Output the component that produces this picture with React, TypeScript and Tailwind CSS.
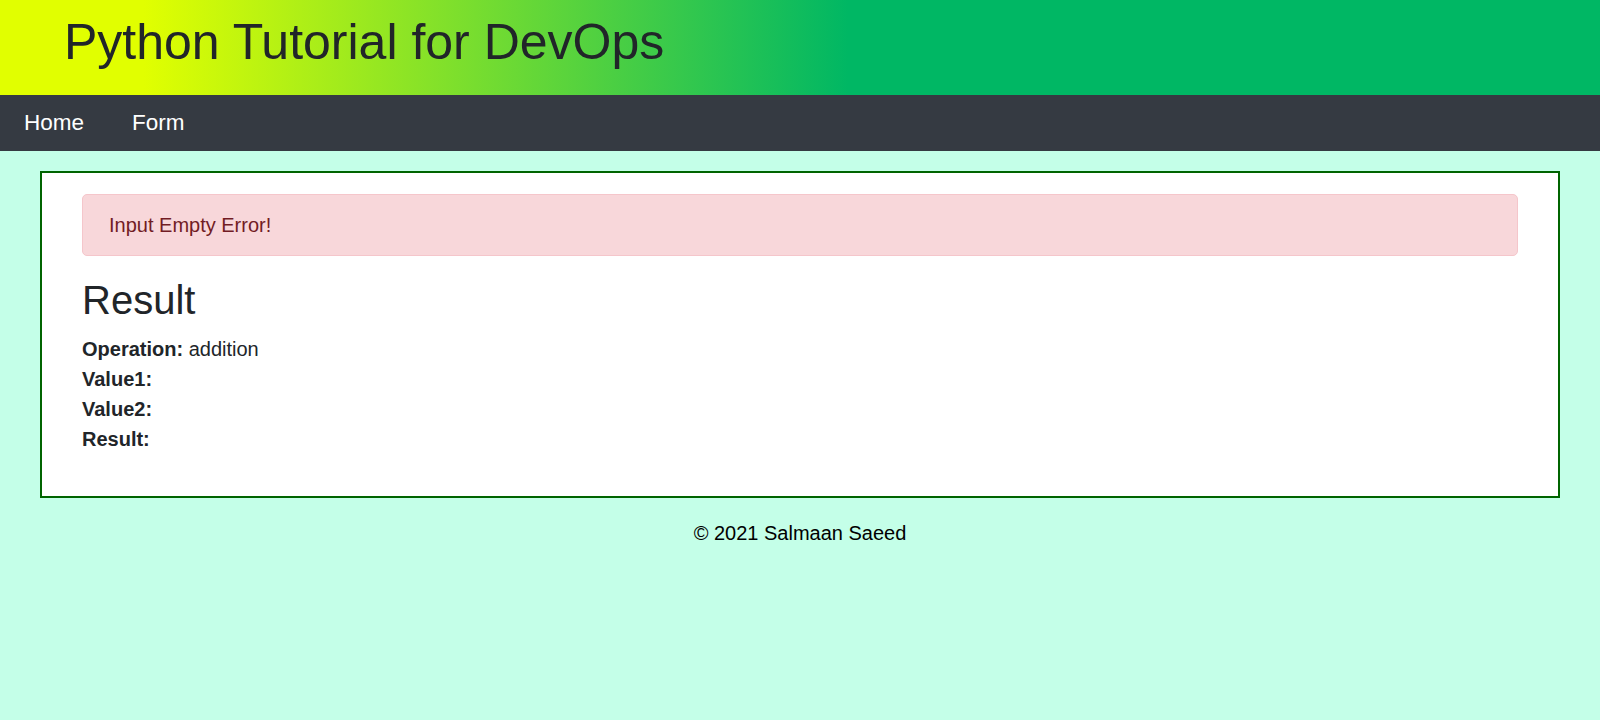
export default function App() {
  return (
    <div
      className="min-h-[720px] bg-[#c4ffe8] text-[#212529]"
      style={{ fontFamily: '"Liberation Sans", Arial, sans-serif' }}
    >
      <header className="h-[95px] bg-[linear-gradient(90deg,#e1ff00_9%,#00b764_53%)] pl-[64px] pt-[12px]">
        <h1 className="text-[50px] leading-[60px] font-normal text-[#212529]">
          Python Tutorial for DevOps
        </h1>
      </header>
      <nav className="flex h-[56px] items-center gap-[48px] bg-[#353a42] pl-[24px]">
        <a className="text-[22.5px] leading-[30px] text-white">Home</a>
        <a className="text-[22.5px] leading-[30px] text-white">Form</a>
      </nav>
      <main className="mx-10 mt-5 border-2 border-[#006400] bg-white px-10 pt-[21px] pb-[42px]">
        <div className="rounded-[5px] border border-[#f5c6cb] bg-[#f8d7da] px-[26px] py-[15px] text-[20px] leading-[30px] text-[#721c24]">
          Input Empty Error!
        </div>
        <h2 className="mt-5 mb-[10px] text-[40px] leading-[48px] font-normal">Result</h2>
        <div className="text-[20px] leading-[30px]">
          <div>
            <b>Operation:</b> addition
          </div>
          <div>
            <b>Value1:</b>
          </div>
          <div>
            <b>Value2:</b>
          </div>
          <div>
            <b>Result:</b>
          </div>
        </div>
      </main>
      <footer className="mt-5 text-center text-[20px] leading-[30px] text-black">
        © 2021 Salmaan Saeed
      </footer>
    </div>
  );
}
